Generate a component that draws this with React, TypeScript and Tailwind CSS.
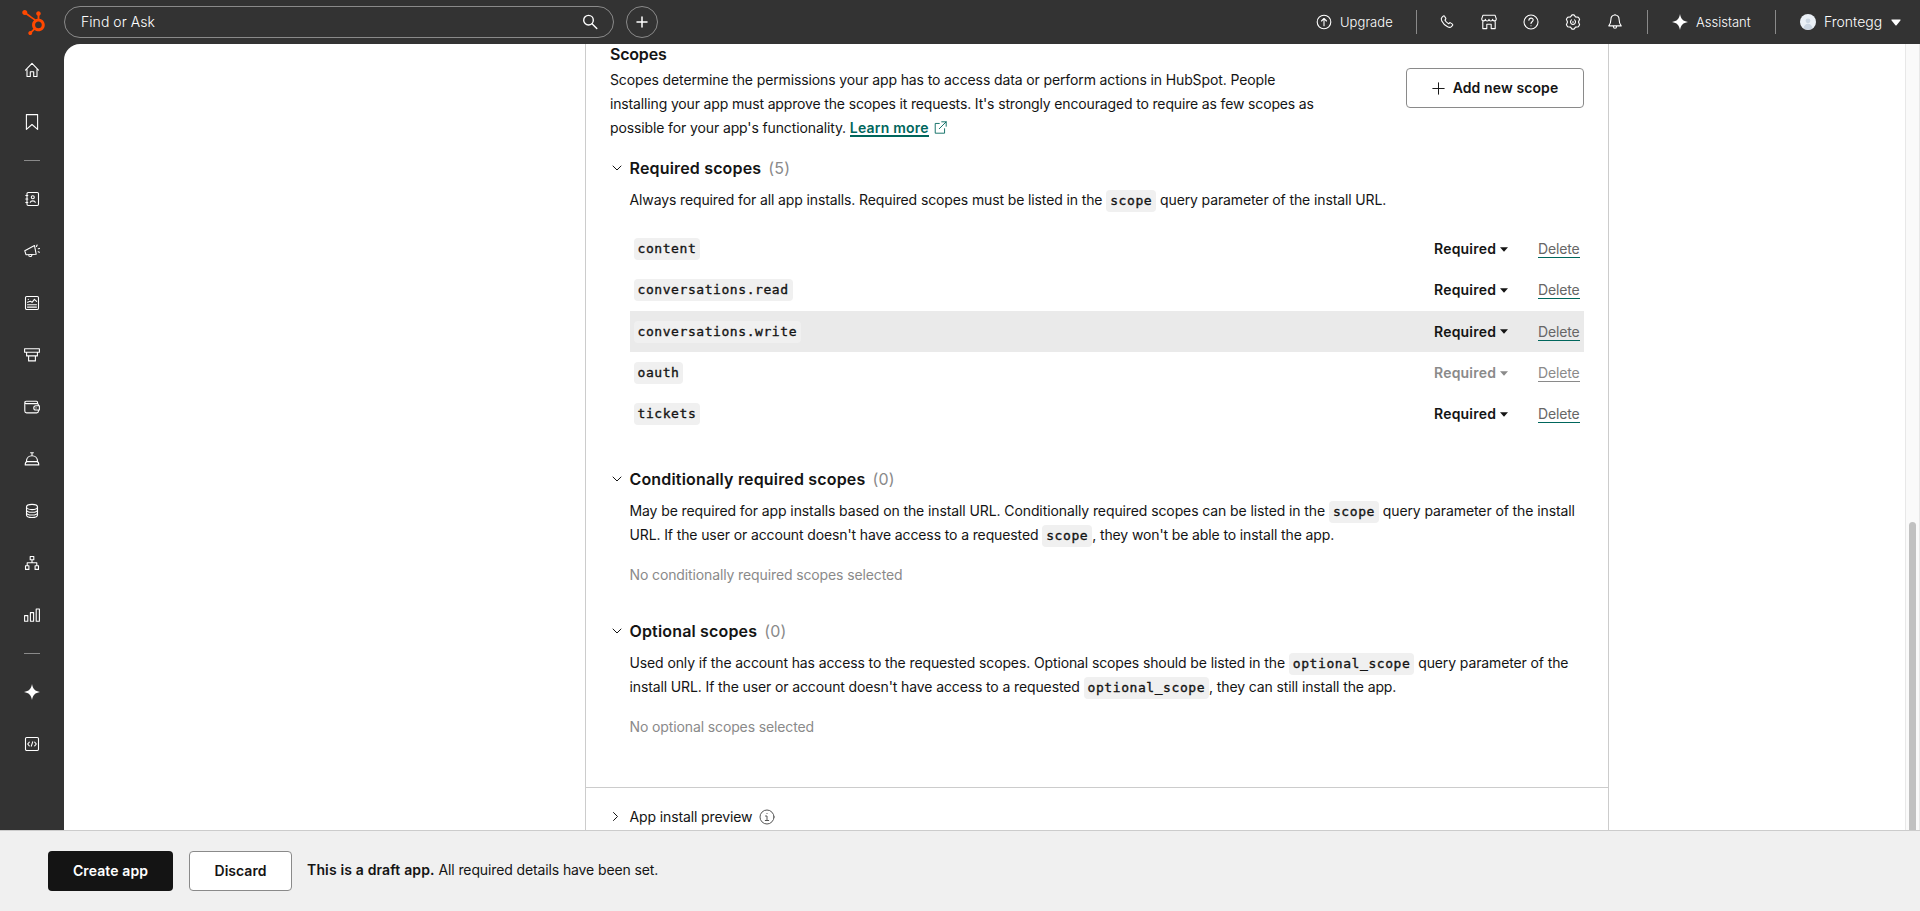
import React, { useState } from 'react';
import { FaHubspot } from 'react-icons/fa';

type ScopeRow = { name: string; locked?: boolean };

const requiredScopes: ScopeRow[] = [
    { name: 'content' },
    { name: 'conversations.read' },
    { name: 'conversations.write' },
    { name: 'oauth', locked: true },
    { name: 'tickets' },
];

const Icon: React.FC<{ size?: number; width?: number; className?: string; children: React.ReactNode }> = ({ size = 16, width = 1.1, className = '', children }) => (
    <svg width={size} height={size} viewBox="0 0 16 16" fill="none" stroke="currentColor" strokeWidth={width} strokeLinecap="round" strokeLinejoin="round" className={`shrink-0 ${className}`}>
        {children}
    </svg>
);

const Sparkle: React.FC = () => (
    <Icon>
        <path d="M8 0C8.900 5 11 7.100 16 8C11 8.900 8.900 11 8 16C7.100 11 5 8.900 0 8C5 7.100 7.100 5 8 0Z" fill="currentColor" stroke="none" />
    </Icon>
);

const Chevron: React.FC<{ open: boolean }> = ({ open }) => (
    <svg width="10" height="10" viewBox="0 0 10 10" fill="none" stroke="#141414" strokeWidth="1" strokeLinecap="round" strokeLinejoin="round">
        <path d={open ? 'M1 3l4 4 4-4' : 'M3.500 .5l4 4-4 4'} />
    </svg>
);

const Code: React.FC<{ children: React.ReactNode }> = ({ children }) => (
    <code className="inline-block h-[22px] rounded bg-[#f0f0f0] px-1 align-baseline font-['DejaVu_Sans_Mono',monospace] text-[13px] leading-[22px] tracking-[0.57px] text-[#141414] [-webkit-text-stroke:0.35px]">{children}</code>
);

const topNav = [
    <Icon key="home"><path d="M1.500 8.200L8 1.300l6.500 6.900M3 7.500v7h3.300V9.700h3.400v4.800H13v-7" /></Icon>,
    <Icon key="bookmark"><path d="M2.400 .6h11.200v14.800L8 10.500l-5.600 4.900z" /></Icon>,
];

const mainNav = [
    <Icon key="contacts">
        <rect x="3" y="1.500" width="11.500" height="13" rx="1.200" />
        <path d="M6.300 11.300c.4-1.900 4.600-1.900 5 0M1.800 4.500h2M1.800 8h2M1.800 11.500h2" />
        <circle cx="8.800" cy="6.200" r="1.500" />
    </Icon>,
    <Icon key="marketing">
        <path d="M.8 7.800L10.500 2.500l1.700 8.800-10.200.4zM4.500 11.800c.2 2.300 3.500 2.300 3.400-.2M12.500 3.400l.6-1.300M14.300 5.800l1.200-.4M14.200 8.700l1.200.5" />
    </Icon>,
    <Icon key="content">
        <rect x="1.500" y="1.500" width="13" height="13" rx="1.200" />
        <path d="M3.500 7.300l2.800-1 1.800 1 2.300-3 2.200 2M3.500 9.700h9M3.500 12.100h9M4.300 4.200v.2" />
    </Icon>,
    <Icon key="sales">
        <path d="M.6 1.700h14.800v3.600H.6zM2.600 5.300h10.800v3.600H2.600zM4.600 8.900h6.800v5H4.600z" />
    </Icon>,
    <Icon key="commerce">
        <path d="M13.500 4.500V3.200c0-.6-.4-1-1-1H2.200C.2 2.200.5 4.600 2.200 4.600h11c.7 0 1.200.5 1.200 1.100v1.100M.8 3.500v8.600c0 1.100.7 1.800 1.800 1.800h10.200c1 0 1.600-.6 1.600-1.600V11M15.400 6.800h-3.600c-2.700 0-2.700 4.200 0 4.200h3.600zM12 8.900h.1" />
    </Icon>,
    <Icon key="service">
        <path d="M2.500 10.300c0-7.500 11-7.500 11 0M6.600 1.800h2.800M8 1.800v2.500M1.200 13.900c0-2.200.6-3.300 1.900-3.300h9.800c1.300 0 1.900 1.100 1.900 3.300z" />
    </Icon>,
    <Icon key="data">
        <ellipse cx="8" cy="4" rx="5.500" ry="2.600" />
        <path d="M2.500 4v8c0 3.400 11 3.400 11 0V4M2.500 6.700c0 3.400 11 3.400 11 0M2.500 9.400c0 3.400 11 3.400 11 0" />
    </Icon>,
    <Icon key="workflows">
        <path d="M6.200 1.500h3.600v3.200H6.200zM1.500 10.800h3.400v3.600H1.500zM11.100 10.800h3.400v3.600h-3.400zM8 4.700v3M3.200 10.800V7.700h9.600v3.100" />
    </Icon>,
    <Icon key="reporting">
        <path d="M.6 8.600h3.200v5.700H.6zM6.400 5.600h3.200v8.700H6.400zM12.200 2h3.200v12.300h-3.200z" />
    </Icon>,
];

const bottomNav = [
    <Sparkle key="ai" />,
    <Icon key="dev">
        <rect x="1.500" y="1.500" width="13" height="13" rx="1.200" />
        <path d="M5.300 6.200L3.700 8l1.600 1.800M10.700 6.200L12.300 8l-1.600 1.800M8.700 5.800l-1.400 4.400" />
    </Icon>,
];

const NavGroup: React.FC<{ items: React.ReactElement[] }> = ({ items }) => (
    <ul>
        {items.map(item => (
            <li key={item.key} className="flex h-[52px] items-center justify-center">{item}</li>
        ))}
    </ul>
);

const NavDivider: React.FC = () => (
    <div className="flex h-[25px] items-center justify-center">
        <div className="h-px w-4 bg-[#8a8a8a]" />
    </div>
);

const Header: React.FC = () => (
    <header className="flex h-11 shrink-0 items-center bg-[#333333] text-white">
        <div className="flex w-16 justify-center pl-0.5">
            <FaHubspot size={25} color="#ff4800" />
        </div>
        <div className="flex h-8 w-[550px] items-center justify-between rounded-full border border-[#8a8a8a] pr-[15px] pl-4">
            <span className="text-[14px] font-light tracking-[0.05px]">Find or Ask</span>
            <Icon width={1.4}><circle cx="6.500" cy="6.200" r="4.800" /><path d="M10 9.700l4.800 4.900" /></Icon>
        </div>
        <button className="ml-3 flex size-8 items-center justify-center rounded-full border border-[#8a8a8a]">
            <Icon width={1.500}><path d="M8 3v10M3 8h10" /></Icon>
        </button>
        <div className="ml-auto flex items-center text-[13px] font-light">
            <Icon><circle cx="8" cy="8" r="6.800" /><path d="M8 11.800V4.700M5.500 7L8 4.500 10.500 7" /></Icon>
            <span className="ml-2 w-[52px] tracking-[0.05px] whitespace-nowrap">Upgrade</span>
            <div className="ml-6 h-6 w-px bg-[#8a8a8a]" />
            <div className="ml-[22px] flex gap-[26px]">
                <Icon><path d="M2.900 3.300l1.300-1.200c.5-.4 1-.3 1.300.2l1.200 1.800c.3.5.3.8-.1 1.200l-.7.8c.8 1.600 2 2.800 3.700 3.700l.8-.8c.4-.4.800-.4 1.200-.1l1.800 1.200c.5.4.5.800.2 1.300l-1.200 1.300c-.9.9-2.400.8-3.800.1C6 11.500 4.200 9.700 2.800 6.900c-.7-1.400-.7-2.800.1-3.600z" /></Icon>
                <Icon><path d="M1.900 1.300h12.200l1.200 3.600c0 2.600-3.600 2.600-3.700.3-.2 2.300-3.500 2.300-3.600 0-.1 2.300-3.400 2.300-3.600 0C4.300 7.500.7 7.500.7 4.900zM1.800 7.300v7.300h4V10.300h4.400v4.300h4V7.300" /></Icon>
                <Icon><circle cx="8" cy="8" r="7" /><path d="M5.900 6.300c.1-2.900 4.300-2.800 4.300-.2 0 1.600-2.200 1.700-2.200 3.300M8 11.700v.1" /></Icon>
                <Icon><path d="M7 .9h2l1.500 2 2.900.4 1.200 2L13.500 8l1.100 2.700-1.200 2-2.900.4-1.500 2H7l-1.500-2-2.900-.4-1.200-2L2.500 8 1.400 5.300l1.200-2 2.900-.4zM6.500 5.900a2.500 2.500 0 103 0M8 7.500v1" /></Icon>
                <Icon><path d="M8 1C5 1 3.900 3.200 3.900 5.500c0 3.500-.7 4.700-2.100 6.400h12.400c-1.400-1.700-2.100-2.900-2.100-6.400C12.100 3.200 11 1 8 1zM6.300 12.200c.2 2.800 3.200 2.800 3.400 0M8 .4V1" /></Icon>
            </div>
            <div className="ml-6 h-6 w-px bg-[#8a8a8a]" />
            <div className="ml-6 flex items-center gap-2">
                <Sparkle />
                <span className="w-[55px] tracking-normal whitespace-nowrap">Assistant</span>
            </div>
            <div className="ml-6 h-6 w-px bg-[#8a8a8a]" />
            <div className="ml-6 size-4 overflow-hidden rounded-full bg-[#eaf0f6]">
                <svg width="16" height="16" viewBox="0 0 16 16" fill="#cbd6e2"><circle cx="8" cy="6.800" r="2.400" /><path d="M3.500 14.500c.5-6.500 8.500-6.500 9 0L8 16z" /></svg>
            </div>
            <span className="ml-2 w-[58px] text-[14px] tracking-normal whitespace-nowrap">Frontegg</span>
            <svg width="10" height="7" viewBox="0 0 10 7" fill="currentColor" className="mr-[19px] ml-[9px]"><path d="M1 .5h8c.6 0 .8.6.4 1L5.600 6.200c-.4.4-.8.4-1.200 0L.6 1.500C.2 1 .4.500 1 .5z" /></svg>
        </div>
    </header>
);

const ScopeSection: React.FC<{ title: string; count: number; children: React.ReactNode }> = ({ title, count, children }) => {
    const [open, setOpen] = useState(true);

    return (
        <section>
            <button onClick={() => setOpen(!open)} className="flex h-6 items-center text-left">
                <span className="flex w-[19.5px] pl-0.5"><Chevron open={open} /></span>
                <span className="text-[16px] font-semibold tracking-[0.17px]">{title}</span>
                <span className="ml-[7px] text-[16px] tracking-[0.2px] text-[#8a8a8a]">({count})</span>
            </button>
            {open && <div className="pl-[19.5px]">{children}</div>}
        </section>
    );
};

const App: React.FC = () => {
    const [hovered, setHovered] = useState('conversations.write');

    return (
        <div className="flex h-screen flex-col overflow-hidden bg-[#333333] font-[Inter,sans-serif] text-[14px] leading-6 tracking-[-0.12px] text-[#141414]">
            <Header />
            <div className="flex min-h-0 flex-1">
                <nav className="w-16 shrink-0 bg-[#333333] text-white">
                    <NavGroup items={topNav} />
                    <NavDivider />
                    <NavGroup items={mainNav} />
                    <NavDivider />
                    <NavGroup items={bottomNav} />
                </nav>
                <main className="flex min-w-0 flex-1 overflow-hidden rounded-tl-2xl bg-white">
                    <div className="ml-[521px] w-[1024px] shrink-0 border-x border-[#cccccc]">
                        <div className="h-[743px] px-6">
                            <div className="flex items-start justify-between">
                                <div className="pt-px">
                                    <h2 className="h-[17px] text-[16px] leading-[18px] font-semibold tracking-[-0.2px]">Scopes</h2>
                                    <p className="mt-1.5 whitespace-nowrap">
                                        Scopes determine the permissions your app has to access data or perform actions in HubSpot. People<br />
                                        <span className="tracking-[-0.15px]">installing your app must approve the scopes it requests. It's strongly encouraged to require as few scopes as</span><br />
                                        possible for your app's functionality.{' '}
                                        <a href="#" className="inline-block h-[18px] border-b-2 border-[#00665c] leading-[18px] font-semibold tracking-[0.2px] text-[#00665c]">Learn more</a>
                                        <Icon size={13} className="ml-[5px] inline-block align-[-1px] text-[#00665c]"><path d="M6.500 3H1.500v12h11.500V9.500M9.500 1h5.500v5.500M15 1L6.500 9.500" /></Icon>
                                    </p>
                                </div>
                                <button className="mt-6 flex h-10 w-[178px] items-center justify-center gap-2 rounded border border-[#8a8a8a] font-semibold tracking-[0.1px]">
                                    <Icon size={13} width={1.2}><path d="M8 1v14M1 8h14" /></Icon>
                                    Add new scope
                                </button>
                            </div>

                            <div className="mt-4">
                                <ScopeSection title="Required scopes" count={5}>
                                    <p className="mt-2 whitespace-nowrap">
                                        Always required for all app installs. Required scopes must be listed in the <Code>scope</Code> query parameter of the install URL.
                                    </p>
                                    <ul className="mt-[16.4px] mb-[-0.4px]">
                                        {requiredScopes.map(scope => (
                                            <li
                                                key={scope.name}
                                                onMouseEnter={() => setHovered(scope.name)}
                                                className={`flex h-[41.33px] items-center px-1 ${hovered === scope.name ? 'bg-[#eaeaea]' : ''}`}
                                            >
                                                <Code>{scope.name}</Code>
                                                <button disabled={scope.locked} className={`mr-px ml-auto flex w-[74px] items-center justify-between font-semibold tracking-[0.2px] ${scope.locked ? 'text-[#8a8a8a]' : ''}`}>
                                                    Required
                                                    <svg width="8" height="5" viewBox="0 0 8 5" fill="currentColor"><path d="M0 .3h8L4 4.700z" /></svg>
                                                </button>
                                                <a href="#" className={`ml-[29px] h-[18px] w-[42px] border-b tracking-[-0.15px] leading-[17px] ${scope.locked ? 'border-[#8a8a8a] text-[#8a8a8a]' : 'border-[#00665c] text-[#666666]'}`}>Delete</a>
                                            </li>
                                        ))}
                                    </ul>
                                </ScopeSection>
                            </div>

                            <div className="mt-8">
                                <ScopeSection title="Conditionally required scopes" count={0}>
                                    <p className="mt-2 whitespace-nowrap">
                                        <span className="tracking-[-0.1px]">May be required for app installs based on the install URL. Conditionally required scopes can be listed in the <Code>scope</Code> query parameter of the install</span><br />
                                        URL. If the user or account doesn't have access to a requested <Code>scope</Code>, they won't be able to install the app.
                                    </p>
                                    <p className="mt-4 text-[#8a8a8a]">No conditionally required scopes selected</p>
                                </ScopeSection>
                            </div>

                            <div className="mt-8">
                                <ScopeSection title="Optional scopes" count={0}>
                                    <p className="mt-2 whitespace-nowrap">
                                        Used only if the account has access to the requested scopes. Optional scopes should be listed in the <Code>optional_scope</Code> query parameter of the<br />
                                        install URL. If the user or account doesn't have access to a requested <Code>optional_scope</Code>, they can still install the app.
                                    </p>
                                    <p className="mt-4 text-[#8a8a8a]">No optional scopes selected</p>
                                </ScopeSection>
                            </div>
                        </div>
                        <div className="flex items-center border-t border-[#cccccc] px-6 pt-[17px]">
                            <span className="flex w-[19.5px]"><Chevron open={false} /></span>
                            App install preview
                            <Icon className="ml-[7px] text-[#555555]" width={1}><circle cx="8" cy="8" r="7" /><path d="M6.500 7H8v4.500M6.300 11.500h3.400M8 4.500v.1" /></Icon>
                        </div>
                    </div>
                    {/* Scrollbar */}
                    <div className="ml-auto w-[15px] border-x border-[#e8e8e8] bg-[#fafafa] px-[3px] pt-[478px]">
                        <div className="h-full rounded-t-full bg-[#c1c1c1]" />
                    </div>
                </main>
            </div>
            <footer className="flex h-[81px] shrink-0 items-center border-t border-[#cccccc] bg-[#f0f0f0] pl-12">
                <button className="h-10 w-[125px] rounded bg-[#141414] font-semibold tracking-[0.1px] text-white">Create app</button>
                <button className="ml-4 h-10 w-[103px] rounded border border-[#8a8a8a] bg-white font-semibold tracking-normal">Discard</button>
                <p className="mb-0.5 ml-[15px]"><span className="font-semibold tracking-[0.15px]">This is a draft app.</span> All required details have been set.</p>
            </footer>
        </div>
    );
};

export default App;
